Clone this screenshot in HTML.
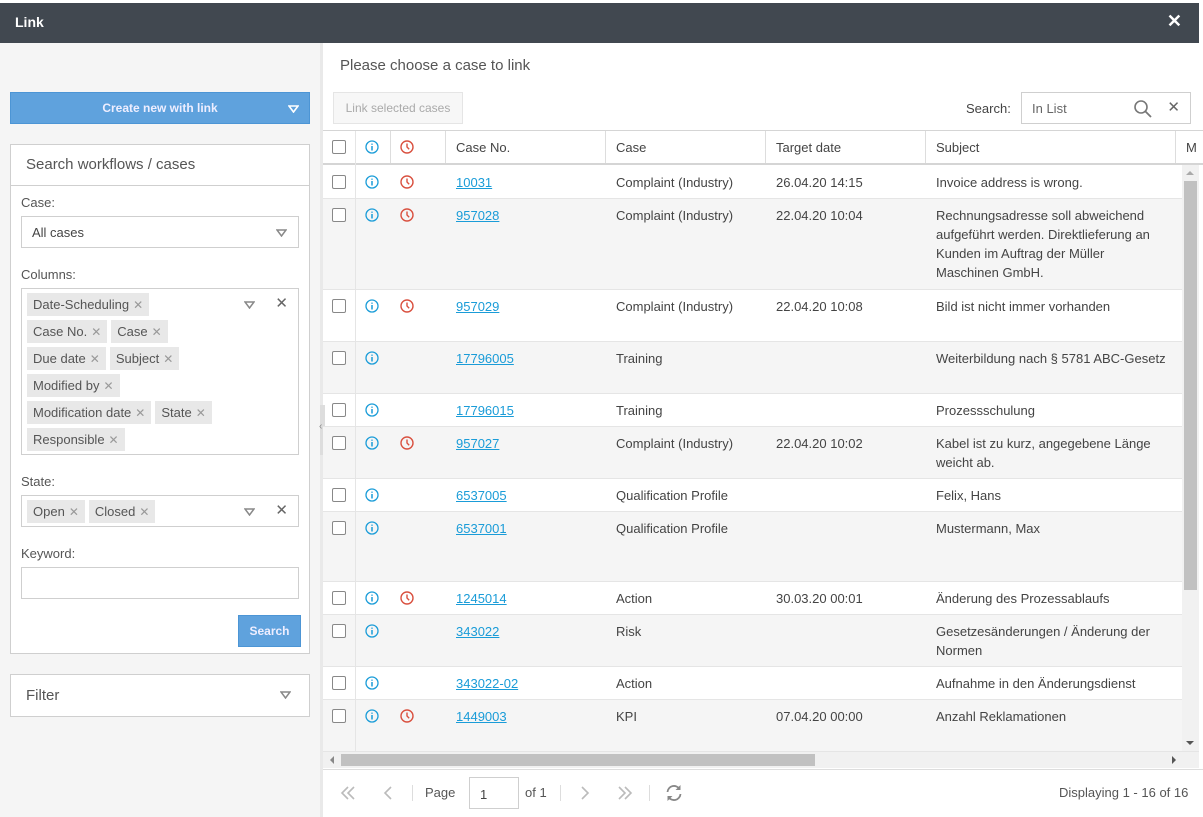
<!DOCTYPE html>
<html><head><meta charset="utf-8"><style>
*{box-sizing:border-box;margin:0;padding:0}
body{width:1203px;height:817px;position:relative;overflow:hidden;background:#fff;font-family:"Liberation Sans",sans-serif;font-size:13px;color:#444}
.a{position:absolute}
.hdr{left:0;top:3px;width:1199px;height:40px;background:#414850;color:#fff;font-weight:bold;font-size:14px;padding:11px 15px}
.left{left:0;top:43px;width:320px;height:774px;background:#f5f5f5}
.split{left:320px;top:43px;width:3px;height:774px;background:#e9e9e9}
.box{background:#fff;border:1px solid #cfcfcf}
.lbl{font-size:13px;color:#555}
.tag{display:inline-block;background:#e8e8e8;color:#555;height:23px;line-height:23px;padding:0 6px;margin:0 4px 4px 0;font-size:13px}
.tag i{font-style:normal;color:#999;font-size:12px;margin-left:4px}
.tri{width:11px;height:8px}
.row{left:323px;width:859px}
.row.g{background:#f5f5f5}
.row .c{position:absolute;top:0;padding-top:8px;line-height:19px;font-size:13px;color:#444}
.row a{color:#1a9cd8;text-decoration:underline}
.cb{position:absolute;width:14px;height:14px;border:1.5px solid #888;border-radius:2px;background:#fff}
.hl{height:1px;background:#e5e5e5}
</style></head><body>
<div class="a hdr">Link<span style="position:absolute;right:17px;top:8px;font-size:18px">✕</span></div>
<div class="a left"></div>
<div class="a split"></div>
<div class="a" style="left:320px;top:405px;width:5px;height:50px;background:#ddd"></div>
<div class="a" style="left:319px;top:421px;font-size:10px;color:#888">‹</div>

<div class="a" style="left:10px;top:92px;width:300px;height:32px;background:#5fa2dd;border:1px solid #4c95d5;color:#eef;font-size:12px;font-weight:bold;text-align:center;line-height:30px">Create new with link<svg class="a tri" style="right:10px;top:12px" viewBox="0 0 11 8"><path d="M1 1h9L5.5 7z" fill="none" stroke="#fff" stroke-width="1.6"/></svg></div>

<div class="a box" style="left:10px;top:144px;width:300px;height:510px"></div>
<div class="a" style="left:11px;top:185px;width:298px;height:1px;background:#cfcfcf"></div>
<div class="a" style="left:26px;top:156px;font-size:15px;color:#555">Search workflows / cases</div>
<div class="a lbl" style="left:21px;top:195px">Case:</div>
<div class="a box" style="left:21px;top:216px;width:278px;height:32px;padding:8px 10px;color:#444">All cases<svg class="a tri" style="right:11px;top:12px" viewBox="0 0 11 8"><path d="M1 1h9L5.5 7z" fill="none" stroke="#888" stroke-width="1.5"/></svg></div>
<div class="a lbl" style="left:21px;top:267px">Columns:</div>
<div class="a box" style="left:21px;top:288px;width:278px;height:167px;padding:4px 0 0 5px">
<div style="width:200px"><span class="tag">Date-Scheduling<i>✕</i></span><br><span class="tag">Case No.<i>✕</i></span><span class="tag">Case<i>✕</i></span><br><span class="tag">Due date<i>✕</i></span><span class="tag">Subject<i>✕</i></span><br><span class="tag">Modified by<i>✕</i></span><br></div><span class="tag">Modification date<i>✕</i></span><span class="tag">State<i>✕</i></span><br><span class="tag">Responsible<i>✕</i></span>
<svg class="a tri" style="right:43px;top:12px" viewBox="0 0 11 8"><path d="M1 1h9L5.5 7z" fill="none" stroke="#888" stroke-width="1.5"/></svg><div class="a" style="right:10px;top:5px;font-size:15px;color:#666">✕</div></div>
<div class="a lbl" style="left:21px;top:474px">State:</div>
<div class="a box" style="left:21px;top:495px;width:278px;height:32px;padding:4px 0 0 5px"><span class="tag">Open<i>✕</i></span><span class="tag">Closed<i>✕</i></span>
<svg class="a tri" style="right:43px;top:12px" viewBox="0 0 11 8"><path d="M1 1h9L5.5 7z" fill="none" stroke="#888" stroke-width="1.5"/></svg><div class="a" style="right:10px;top:5px;font-size:15px;color:#666">✕</div></div>
<div class="a lbl" style="left:21px;top:546px">Keyword:</div>
<div class="a box" style="left:21px;top:567px;width:278px;height:32px"></div>
<div class="a" style="left:238px;top:615px;width:63px;height:32px;background:#5fa2dd;border:1px solid #4c95d5;color:#eef;font-size:12px;font-weight:bold;text-align:center;line-height:30px">Search</div>
<div class="a box" style="left:10px;top:674px;width:300px;height:43px;padding:12px 15px;font-size:15px;color:#555">Filter<svg class="a tri" style="right:18px;top:16px" viewBox="0 0 11 8"><path d="M1 1h9L5.5 7z" fill="none" stroke="#888" stroke-width="1.5"/></svg></div>

<div class="a" style="left:340px;top:57px;font-size:15px;color:#555">Please choose a case to link</div>
<div class="a" style="left:333px;top:92px;width:130px;height:32px;border:1px solid #e5e5e5;background:#f7f7f7;color:#aaa;font-size:12px;line-height:30px;text-align:center">Link selected cases</div>
<div class="a" style="left:966px;top:101px;color:#444">Search:</div>
<div class="a box" style="left:1021px;top:92px;width:170px;height:32px;padding:8px 10px;color:#666">In List
<svg class="a" style="left:111px;top:6px" width="20" height="20" viewBox="0 0 20 20"><circle cx="8" cy="8" r="6" fill="none" stroke="#777" stroke-width="1.6"/><path d="M12.5 12.5L18 18" stroke="#777" stroke-width="1.8"/></svg>
<div class="a" style="right:10px;top:5px;font-size:15px;color:#666">✕</div></div>

<!-- grid header -->
<div class="a" style="left:323px;top:130px;width:880px;height:1px;background:#d5d5d5"></div>
<div class="a" style="left:323px;top:163px;width:880px;height:2px;background:#d5d5d5"></div>
<div class="a" style="left:355px;top:131px;width:1px;height:620px;background:#e5e5e5"></div>
<div class="a" style="left:390px;top:131px;width:1px;height:32px;background:#ddd"></div>
<div class="a" style="left:445px;top:131px;width:1px;height:32px;background:#ddd"></div>
<div class="a" style="left:605px;top:131px;width:1px;height:32px;background:#ddd"></div>
<div class="a" style="left:765px;top:131px;width:1px;height:32px;background:#ddd"></div>
<div class="a" style="left:925px;top:131px;width:1px;height:32px;background:#ddd"></div>
<div class="a" style="left:1175px;top:131px;width:1px;height:32px;background:#ddd"></div>
<div class="a cb" style="left:332px;top:140px"></div>
<svg class="a" style="left:365px;top:140px" width="14" height="14" viewBox="0 0 14 14"><circle cx="7" cy="7" r="6" fill="none" stroke="#1a9cd8" stroke-width="1.3"/><path d="M7 6v4.5M7 3.6v1.2" stroke="#1a9cd8" stroke-width="1.5"/></svg>
<svg class="a" style="left:400px;top:140px" width="14" height="14" viewBox="0 0 14 14"><circle cx="7" cy="7" r="6" fill="none" stroke="#d9503f" stroke-width="1.4"/><path d="M7 3.5V7l2.2 2.2" fill="none" stroke="#d9503f" stroke-width="1.4"/></svg>
<div class="a" style="left:456px;top:140px">Case No.</div>
<div class="a" style="left:616px;top:140px">Case</div>
<div class="a" style="left:776px;top:140px">Target date</div>
<div class="a" style="left:936px;top:140px">Subject</div>
<div class="a" style="left:1186px;top:140px">M</div>

<!-- rows -->
<div class="a row" style="top:165px;height:33px"><div class="cb" style="left:9px;top:10px"></div><svg class="a" style="left:42px;top:10px" width="14" height="14" viewBox="0 0 14 14"><circle cx="7" cy="7" r="6" fill="none" stroke="#1a9cd8" stroke-width="1.3"/><path d="M7 6v4.5M7 3.6v1.2" stroke="#1a9cd8" stroke-width="1.5"/></svg><svg class="a" style="left:77px;top:10px" width="14" height="14" viewBox="0 0 14 14"><circle cx="7" cy="7" r="6" fill="none" stroke="#d9503f" stroke-width="1.4"/><path d="M7 3.5V7l2.2 2.2" fill="none" stroke="#d9503f" stroke-width="1.4"/></svg><div class="c" style="left:133px"><a>10031</a></div><div class="c" style="left:293px">Complaint (Industry)</div><div class="c" style="left:453px">26.04.20 14:15</div><div class="c" style="left:613px;width:240px">Invoice address is wrong.</div></div>
<div class="a row g" style="top:198px;height:91px"><div class="cb" style="left:9px;top:10px"></div><svg class="a" style="left:42px;top:10px" width="14" height="14" viewBox="0 0 14 14"><circle cx="7" cy="7" r="6" fill="none" stroke="#1a9cd8" stroke-width="1.3"/><path d="M7 6v4.5M7 3.6v1.2" stroke="#1a9cd8" stroke-width="1.5"/></svg><svg class="a" style="left:77px;top:10px" width="14" height="14" viewBox="0 0 14 14"><circle cx="7" cy="7" r="6" fill="none" stroke="#d9503f" stroke-width="1.4"/><path d="M7 3.5V7l2.2 2.2" fill="none" stroke="#d9503f" stroke-width="1.4"/></svg><div class="c" style="left:133px"><a>957028</a></div><div class="c" style="left:293px">Complaint (Industry)</div><div class="c" style="left:453px">22.04.20 10:04</div><div class="c" style="left:613px;width:240px">Rechnungsadresse soll abweichend<br>aufgeführt werden. Direktlieferung an<br>Kunden im Auftrag der Müller<br>Maschinen GmbH.</div></div>
<div class="a row" style="top:289px;height:52px"><div class="cb" style="left:9px;top:10px"></div><svg class="a" style="left:42px;top:10px" width="14" height="14" viewBox="0 0 14 14"><circle cx="7" cy="7" r="6" fill="none" stroke="#1a9cd8" stroke-width="1.3"/><path d="M7 6v4.5M7 3.6v1.2" stroke="#1a9cd8" stroke-width="1.5"/></svg><svg class="a" style="left:77px;top:10px" width="14" height="14" viewBox="0 0 14 14"><circle cx="7" cy="7" r="6" fill="none" stroke="#d9503f" stroke-width="1.4"/><path d="M7 3.5V7l2.2 2.2" fill="none" stroke="#d9503f" stroke-width="1.4"/></svg><div class="c" style="left:133px"><a>957029</a></div><div class="c" style="left:293px">Complaint (Industry)</div><div class="c" style="left:453px">22.04.20 10:08</div><div class="c" style="left:613px;width:240px">Bild ist nicht immer vorhanden</div></div>
<div class="a row g" style="top:341px;height:52px"><div class="cb" style="left:9px;top:10px"></div><svg class="a" style="left:42px;top:10px" width="14" height="14" viewBox="0 0 14 14"><circle cx="7" cy="7" r="6" fill="none" stroke="#1a9cd8" stroke-width="1.3"/><path d="M7 6v4.5M7 3.6v1.2" stroke="#1a9cd8" stroke-width="1.5"/></svg><div class="c" style="left:133px"><a>17796005</a></div><div class="c" style="left:293px">Training</div><div class="c" style="left:613px;width:250px">Weiterbildung nach § 5781 ABC-Gesetz</div></div>
<div class="a row" style="top:393px;height:33px"><div class="cb" style="left:9px;top:10px"></div><svg class="a" style="left:42px;top:10px" width="14" height="14" viewBox="0 0 14 14"><circle cx="7" cy="7" r="6" fill="none" stroke="#1a9cd8" stroke-width="1.3"/><path d="M7 6v4.5M7 3.6v1.2" stroke="#1a9cd8" stroke-width="1.5"/></svg><div class="c" style="left:133px"><a>17796015</a></div><div class="c" style="left:293px">Training</div><div class="c" style="left:613px">Prozessschulung</div></div>
<div class="a row g" style="top:426px;height:52px"><div class="cb" style="left:9px;top:10px"></div><svg class="a" style="left:42px;top:10px" width="14" height="14" viewBox="0 0 14 14"><circle cx="7" cy="7" r="6" fill="none" stroke="#1a9cd8" stroke-width="1.3"/><path d="M7 6v4.5M7 3.6v1.2" stroke="#1a9cd8" stroke-width="1.5"/></svg><svg class="a" style="left:77px;top:10px" width="14" height="14" viewBox="0 0 14 14"><circle cx="7" cy="7" r="6" fill="none" stroke="#d9503f" stroke-width="1.4"/><path d="M7 3.5V7l2.2 2.2" fill="none" stroke="#d9503f" stroke-width="1.4"/></svg><div class="c" style="left:133px"><a>957027</a></div><div class="c" style="left:293px">Complaint (Industry)</div><div class="c" style="left:453px">22.04.20 10:02</div><div class="c" style="left:613px;width:240px">Kabel ist zu kurz, angegebene Länge<br>weicht ab.</div></div>
<div class="a row" style="top:478px;height:33px"><div class="cb" style="left:9px;top:10px"></div><svg class="a" style="left:42px;top:10px" width="14" height="14" viewBox="0 0 14 14"><circle cx="7" cy="7" r="6" fill="none" stroke="#1a9cd8" stroke-width="1.3"/><path d="M7 6v4.5M7 3.6v1.2" stroke="#1a9cd8" stroke-width="1.5"/></svg><div class="c" style="left:133px"><a>6537005</a></div><div class="c" style="left:293px">Qualification Profile</div><div class="c" style="left:613px">Felix, Hans</div></div>
<div class="a row g" style="top:511px;height:70px"><div class="cb" style="left:9px;top:10px"></div><svg class="a" style="left:42px;top:10px" width="14" height="14" viewBox="0 0 14 14"><circle cx="7" cy="7" r="6" fill="none" stroke="#1a9cd8" stroke-width="1.3"/><path d="M7 6v4.5M7 3.6v1.2" stroke="#1a9cd8" stroke-width="1.5"/></svg><div class="c" style="left:133px"><a>6537001</a></div><div class="c" style="left:293px">Qualification Profile</div><div class="c" style="left:613px">Mustermann, Max</div></div>
<div class="a row" style="top:581px;height:33px"><div class="cb" style="left:9px;top:10px"></div><svg class="a" style="left:42px;top:10px" width="14" height="14" viewBox="0 0 14 14"><circle cx="7" cy="7" r="6" fill="none" stroke="#1a9cd8" stroke-width="1.3"/><path d="M7 6v4.5M7 3.6v1.2" stroke="#1a9cd8" stroke-width="1.5"/></svg><svg class="a" style="left:77px;top:10px" width="14" height="14" viewBox="0 0 14 14"><circle cx="7" cy="7" r="6" fill="none" stroke="#d9503f" stroke-width="1.4"/><path d="M7 3.5V7l2.2 2.2" fill="none" stroke="#d9503f" stroke-width="1.4"/></svg><div class="c" style="left:133px"><a>1245014</a></div><div class="c" style="left:293px">Action</div><div class="c" style="left:453px">30.03.20 00:01</div><div class="c" style="left:613px">Änderung des Prozessablaufs</div></div>
<div class="a row g" style="top:614px;height:52px"><div class="cb" style="left:9px;top:10px"></div><svg class="a" style="left:42px;top:10px" width="14" height="14" viewBox="0 0 14 14"><circle cx="7" cy="7" r="6" fill="none" stroke="#1a9cd8" stroke-width="1.3"/><path d="M7 6v4.5M7 3.6v1.2" stroke="#1a9cd8" stroke-width="1.5"/></svg><div class="c" style="left:133px"><a>343022</a></div><div class="c" style="left:293px">Risk</div><div class="c" style="left:613px;width:240px">Gesetzesänderungen / Änderung der<br>Normen</div></div>
<div class="a row" style="top:666px;height:33px"><div class="cb" style="left:9px;top:10px"></div><svg class="a" style="left:42px;top:10px" width="14" height="14" viewBox="0 0 14 14"><circle cx="7" cy="7" r="6" fill="none" stroke="#1a9cd8" stroke-width="1.3"/><path d="M7 6v4.5M7 3.6v1.2" stroke="#1a9cd8" stroke-width="1.5"/></svg><div class="c" style="left:133px"><a>343022-02</a></div><div class="c" style="left:293px">Action</div><div class="c" style="left:613px">Aufnahme in den Änderungsdienst</div></div>
<div class="a row g" style="top:699px;height:52px"><div class="cb" style="left:9px;top:10px"></div><svg class="a" style="left:42px;top:10px" width="14" height="14" viewBox="0 0 14 14"><circle cx="7" cy="7" r="6" fill="none" stroke="#1a9cd8" stroke-width="1.3"/><path d="M7 6v4.5M7 3.6v1.2" stroke="#1a9cd8" stroke-width="1.5"/></svg><svg class="a" style="left:77px;top:10px" width="14" height="14" viewBox="0 0 14 14"><circle cx="7" cy="7" r="6" fill="none" stroke="#d9503f" stroke-width="1.4"/><path d="M7 3.5V7l2.2 2.2" fill="none" stroke="#d9503f" stroke-width="1.4"/></svg><div class="c" style="left:133px"><a>1449003</a></div><div class="c" style="left:293px">KPI</div><div class="c" style="left:453px">07.04.20 00:00</div><div class="c" style="left:613px">Anzahl Reklamationen</div></div>
<!-- row separators -->
<div class="a hl" style="left:323px;top:198px;width:859px"></div>
<div class="a hl" style="left:323px;top:289px;width:859px"></div>
<div class="a hl" style="left:323px;top:341px;width:859px"></div>
<div class="a hl" style="left:323px;top:393px;width:859px"></div>
<div class="a hl" style="left:323px;top:426px;width:859px"></div>
<div class="a hl" style="left:323px;top:478px;width:859px"></div>
<div class="a hl" style="left:323px;top:511px;width:859px"></div>
<div class="a hl" style="left:323px;top:581px;width:859px"></div>
<div class="a hl" style="left:323px;top:614px;width:859px"></div>
<div class="a hl" style="left:323px;top:666px;width:859px"></div>
<div class="a hl" style="left:323px;top:699px;width:859px"></div>
<div class="a" style="left:355px;top:165px;width:1px;height:586px;background:#e5e5e5"></div>

<!-- scrollbars -->
<div class="a" style="left:1182px;top:165px;width:17px;height:586px;background:#f1f1f1"></div>
<div class="a" style="left:1184px;top:181px;width:13px;height:409px;background:#c1c1c1"></div>
<div class="a" style="left:1186px;top:171px;border-left:4px solid transparent;border-right:4px solid transparent;border-bottom:4px solid #aaa"></div>
<div class="a" style="left:1186px;top:741px;border-left:4px solid transparent;border-right:4px solid transparent;border-top:4px solid #555"></div>
<div class="a" style="left:323px;top:751px;width:876px;height:17px;background:#f1f1f1;border-top:1px solid #e5e5e5"></div>
<div class="a" style="left:341px;top:754px;width:474px;height:12px;background:#c1c1c1"></div>
<div class="a" style="left:330px;top:756px;border-top:4px solid transparent;border-bottom:4px solid transparent;border-right:4px solid #888"></div>
<div class="a" style="left:1172px;top:756px;border-top:4px solid transparent;border-bottom:4px solid transparent;border-left:4px solid #555"></div>
<div class="a" style="left:323px;top:769px;width:880px;height:1px;background:#ddd"></div>

<!-- pager -->
<svg class="a" style="left:340px;top:785px" width="16" height="16" viewBox="0 0 16 16"><path d="M8 2L2 8l6 6M14 2L8 8l6 6" fill="none" stroke="#bbb" stroke-width="1.6"/></svg>
<svg class="a" style="left:382px;top:785px" width="12" height="16" viewBox="0 0 12 16"><path d="M9 2L3 8l6 6" fill="none" stroke="#bbb" stroke-width="1.6"/></svg>
<div class="a" style="left:412px;top:785px;width:1px;height:16px;background:#ddd"></div>
<div class="a" style="left:425px;top:785px;color:#555">Page</div>
<div class="a box" style="left:469px;top:777px;width:50px;height:32px;padding:9px 10px;color:#444">1</div>
<div class="a" style="left:525px;top:785px;color:#555">of 1</div>
<div class="a" style="left:560px;top:785px;width:1px;height:16px;background:#ddd"></div>
<svg class="a" style="left:579px;top:785px" width="12" height="16" viewBox="0 0 12 16"><path d="M3 2l6 6-6 6" fill="none" stroke="#bbb" stroke-width="1.6"/></svg>
<svg class="a" style="left:617px;top:785px" width="16" height="16" viewBox="0 0 16 16"><path d="M2 2l6 6-6 6M8 2l6 6-6 6" fill="none" stroke="#bbb" stroke-width="1.6"/></svg>
<div class="a" style="left:649px;top:785px;width:1px;height:16px;background:#ddd"></div>
<svg class="a" style="left:664px;top:783px" width="20" height="20" viewBox="0 0 20 20"><path d="M3.5 9A6.5 6.5 0 0 1 15.5 6M16.5 11A6.5 6.5 0 0 1 4.5 14" fill="none" stroke="#888" stroke-width="1.8"/><path d="M16.5 2v5h-5z M3.5 18v-5h5z" fill="#888"/></svg>
<div class="a" style="left:1059px;top:785px;color:#555">Displaying 1 - 16 of 16</div>
</body></html>
